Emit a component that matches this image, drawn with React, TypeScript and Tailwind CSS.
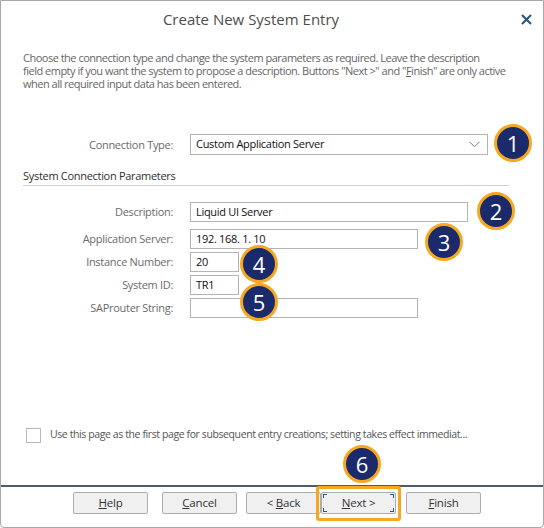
import React from "react";

function Badge({ n, x, y }: { n: number; x: number; y: number }) {
  return (
    <div
      className="absolute w-[38px] h-[38px] rounded-full bg-[#1b2a6b] border-[3px] border-[#f6a821] flex items-center justify-center text-white text-[22px] leading-none font-['Open_Sans',sans-serif]"
      style={{ left: x - 19, top: y - 19 }}
    >
      {n}
    </div>
  );
}

function Btn({ children, focused }: { children: React.ReactNode; focused?: boolean }) {
  return (
    <div className="relative w-[75px] h-[22px] bg-[#f0f0f0] border border-[#adadad] rounded-[2px] flex items-center justify-center text-[11.5px] tracking-[-0.2px] text-[#333]">
      {children}
      {focused && (
        <>
          <span className="absolute left-[1px] top-[1px] w-[4px] h-[4px] border-l border-t border-[#1f5f8b]" />
          <span className="absolute right-[1px] top-[1px] w-[4px] h-[4px] border-r border-t border-[#1f5f8b]" />
          <span className="absolute left-[1px] bottom-[1px] w-[4px] h-[4px] border-l border-b border-[#1f5f8b]" />
          <span className="absolute right-[1px] bottom-[1px] w-[4px] h-[4px] border-r border-b border-[#1f5f8b]" />
        </>
      )}
    </div>
  );
}

function Row({
  label,
  value,
  w,
  mt,
}: {
  label: string;
  value: string;
  w: number;
  mt: string;
}) {
  return (
    <div className={`flex items-center ${mt}`}>
      <div className="w-[172px] text-right text-[11px] leading-[14px] tracking-[-0.3px] text-[#6b6b6b]">{label}</div>
      <div className="w-[17px]" />
      <div
        className="h-[20px] border border-[#b4b4b4] bg-white flex items-center pl-[5px] text-[11px] tracking-[-0.3px] text-[#111]"
        style={{ width: w }}
      >
        {value}
      </div>
    </div>
  );
}

export default function App() {
  return (
    <div className="relative w-[544px] h-[528px] bg-white border border-[#a9a9a9] rounded-b-[4px] flex flex-col font-['Open_Sans','Noto_Sans',sans-serif] overflow-hidden">
      {/* title bar */}
      <div className="h-[36px] flex items-center shrink-0">
        <div className="w-[500px] text-center text-[15px] text-[#4d4d4d]">Create New System Entry</div>
        <div className="flex-1 flex items-center justify-start pl-[20px]">
          <svg width="11" height="11" viewBox="0 0 11 11">
            <path d="M1 1 L10 10 M10 1 L1 10" stroke="#2b5a7c" strokeWidth="2.2" />
          </svg>
        </div>
      </div>

      {/* description */}
      <div className="mt-[14px] px-[22px] text-[11px] leading-[13px] text-[#666] tracking-[-0.5px] whitespace-nowrap">
        <div>Choose the connection type and change the system parameters as required. Leave the description</div>
        <div>
          field empty if you want the system to propose a description. Buttons "Next &gt;" and "
          <span className="underline">F</span>inish" are only active
        </div>
        <div>when all required input data has been entered.</div>
      </div>

      {/* connection type */}
      <div className="mt-[44px] flex items-center">
        <div className="w-[172px] text-right text-[11px] leading-[14px] tracking-[-0.3px] text-[#6b6b6b]">Connection Type:</div>
        <div className="w-[17px]" />
        <div className="w-[298px] h-[21px] border border-[#b4b4b4] flex items-center justify-between pl-[5px] pr-[7px] text-[11px] tracking-[-0.3px] text-[#111]">
          <span>Custom Application Server</span>
          <svg width="11" height="7" viewBox="0 0 11 7">
            <path d="M0.5 0.8 L5.5 5.8 L10.5 0.8" fill="none" stroke="#5b7a95" strokeWidth="1" />
          </svg>
        </div>
      </div>

      {/* section header */}
      <div className="mt-[14px] ml-[22px] w-[486px] text-[11px] leading-[14px] tracking-[-0.3px] text-[#2e2e2e] pb-[2px] border-b border-[#cfcfcf]">
        System Connection Parameters
      </div>

      <Row label="Description:" value="Liquid UI Server" w={278} mt="mt-[16px]" />
      <Row label="Application Server:" value="192. 168. 1. 10" w={228} mt="mt-[7px]" />
      <Row label="Instance Number:" value="20" w={49} mt="mt-[3px]" />
      <Row label="System ID:" value="TR1" w={49} mt="mt-[3px]" />
      <Row label="SAProuter String:" value="" w={228} mt="mt-[3px]" />

      <div className="flex-1" />

      {/* checkbox */}
      <div className="flex items-center pl-[25px] mb-[42px]">
        <div className="w-[15px] h-[15px] border border-[#b8b8b8] bg-white" />
        <div className="ml-[9px] text-[10.5px] tracking-[-0.4px] text-[#555] whitespace-nowrap">
          Use this page as the first page for subsequent entry creations; setting takes effect immediat...
        </div>
      </div>

      {/* footer */}
      <div className="h-[2px] bg-[#4e5d68]" />
      <div className="h-[40px] flex items-start pt-[5px] pl-[72px] gap-[14px]">
        <Btn>
          <span><span className="underline">H</span>elp</span>
        </Btn>
        <Btn>
          <span><span className="underline">C</span>ancel</span>
        </Btn>
        <div className="-ml-[5px]">
          <Btn>
            <span>&lt; <span className="underline">B</span>ack</span>
          </Btn>
        </div>
        <div className="-ml-[14px] relative">
          <Btn focused>
            <span><span className="underline">N</span>ext &gt;</span>
          </Btn>
          <div className="absolute -left-[5px] -top-[6px] w-[85px] h-[35px] border-[3px] border-[#f6a821] rounded-[3px]" />
        </div>
        <div className="-ml-[4px]">
          <Btn>
            <span><span className="underline">F</span>inish</span>
          </Btn>
        </div>
      </div>

      <Badge n={1} x={512} y={142} />
      <Badge n={2} x={495} y={210} />
      <Badge n={3} x={443} y={241} />
      <Badge n={4} x={258} y={263} />
      <Badge n={5} x={258} y={301} />
      <Badge n={6} x={361} y={463} />
    </div>
  );
}
